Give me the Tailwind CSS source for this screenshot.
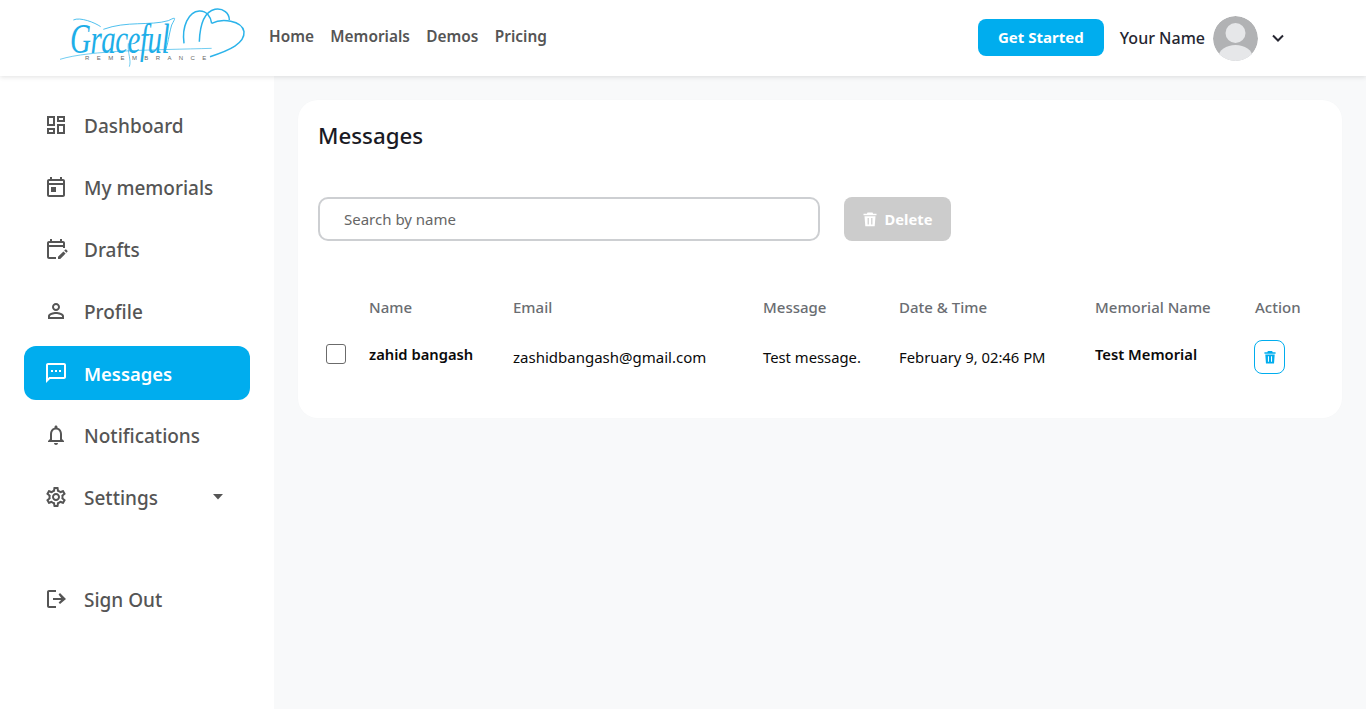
<!doctype html>
<html lang="en">
<head>
<meta charset="utf-8">
<title>Messages</title>
<script src="https://cdn.jsdelivr.net/npm/@tailwindcss/browser@4"></script>
</head>
<body class="font-['Noto_Sans',sans-serif] bg-[#f8f9fa] overflow-hidden">
<div class="w-[1366px] h-[709px] flex flex-col">
  <header class="h-[76px] shrink-0 bg-white shadow-[0_1px_5px_rgba(0,0,0,0.12)] relative z-10 flex items-center">
    <div class="w-[269px] shrink-0 h-full relative">
      <svg class="absolute left-[40px] top-0" width="240" height="80" viewBox="0 0 720 240" fill="none" stroke="#2bb3ea">
        <path d="M60 178C150 150 350 150 515 145" stroke-width="2"/>
        <path d="M432 130C425 80 445 35 478 33C500 32 512 50 515 70" stroke-width="4.5"/>
        <path d="M478 125C480 70 495 35 525 28C550 24 568 40 568 60" stroke-width="4.5"/>
        <path d="M515 70C545 55 605 60 612 95C615 130 570 150 510 170" stroke-width="4.5"/>
        <path d="M100 60C120 50 165 68 182 80" stroke-width="2.5"/>
        <path d="M190 88C260 62 330 78 385 62C412 48 405 55 395 75C385 110 385 130 375 155" stroke-width="2.5"/>
        <path d="M265 130C262 160 275 180 268 200" stroke-width="2"/>
      </svg>
      <span class="absolute left-[70px] top-[27px] font-['Liberation_Serif',serif] italic text-[29px] leading-[22px] tracking-[-0.5px] scale-y-[1.45] text-[#1eaee8]">Graceful</span>
      <span class="absolute left-[85px] top-[55px] font-['Liberation_Sans',sans-serif] text-[6px] leading-[7px] tracking-[7.4px] text-[#666]">REMEMBRANCE</span>
    </div>
    <nav class="flex gap-[16.4px] text-[15.4px] font-semibold text-[#555] -mt-[3px]">
      <a>Home</a><a>Memorials</a><a>Demos</a><a>Pricing</a>
    </nav>
    <div class="ml-auto flex items-center mr-[80px]">
      <button class="w-[126px] h-[37px] -mt-[1px] rounded-lg bg-[#00adee] text-white text-[15px] font-bold">Get Started</button>
      <span class="ml-4 text-[16px] font-medium text-[#262631]">Your Name</span>
      <svg class="ml-2 rounded-full" width="45" height="45" viewBox="0 0 45 45">
        <circle cx="22.5" cy="22.5" r="22.5" fill="#b1b2b4"/>
        <circle cx="22.5" cy="17" r="10" fill="#e6e7e9"/>
        <ellipse cx="22.5" cy="41" rx="17" ry="12" fill="#e6e7e9"/>
      </svg>
      <svg class="ml-[12px]" width="16" height="16" viewBox="0 0 16 16" fill="none" stroke="#262631" stroke-width="2"><path d="M3 5.5l5 5 5-5"/></svg>
    </div>
  </header>
  <div class="flex flex-1 min-h-0">
    <aside class="w-[274px] shrink-0 bg-white px-6 pt-[22px] text-[#555] text-[19px] font-medium">
      <div class="flex flex-col gap-2">
        <a class="h-[54px] rounded-xl flex items-center gap-[16px] px-5">
          <svg class="w-6 h-6 shrink-0" viewBox="0 0 24 24" fill="currentColor"><path d="M19 5v2h-4V5h4M9 5v6H5V5h4m10 8v6h-4v-6h4M9 17v2H5v-2h4M21 3h-8v6h8V3zM11 3H3v10h8V3zm10 8h-8v10h8V11zm-10 4H3v6h8v-6z"/></svg>
          <span class="pt-[2px]">Dashboard</span>
        </a>
        <a class="h-[54px] rounded-xl flex items-center gap-[16px] px-5">
          <svg class="w-6 h-6 shrink-0" viewBox="0 0 24 24" fill="currentColor"><path d="M19 4h-1V2h-2v2H8V2H6v2H5c-1.1 0-2 .9-2 2v14c0 1.1.9 2 2 2h14c1.1 0 2-.9 2-2V6c0-1.1-.9-2-2-2zm0 16H5V10h14v10zm0-12H5V6h14v2zM7 12h5v5H7z"/></svg>
          <span class="pt-[2px]">My memorials</span>
        </a>
        <a class="h-[54px] rounded-xl flex items-center gap-[16px] px-5">
          <svg class="w-6 h-6 shrink-0" viewBox="0 0 24 24" fill="currentColor"><path d="M5 22c-1.1 0-2-.9-2-2V6c0-1.1.9-2 2-2h1V2h2v2h8V2h2v2h1c1.1 0 2 .9 2 2v5h-2v-1H5v10h7v2H5zM5 8h14V6H5v2z"/><path d="M14 22v-2.2l5.4-5.4 2.2 2.2-5.4 5.4H14zm6.2-8.4l1-1c.3-.3.7-.3 1 0l1.2 1.2c.3.3.3.7 0 1l-1 1-2.2-2.2z"/></svg>
          <span class="pt-[2px]">Drafts</span>
        </a>
        <a class="h-[54px] rounded-xl flex items-center gap-[16px] px-5">
          <svg class="w-6 h-6 shrink-0" viewBox="0 0 24 24" fill="currentColor"><path d="M12 6c1.1 0 2 .9 2 2s-.9 2-2 2-2-.9-2-2 .9-2 2-2m0 9c2.7 0 5.8 1.29 6 2v1H6v-.99c.2-.72 3.3-2.01 6-2.01M12 4C9.79 4 8 5.79 8 8s1.79 4 4 4 4-1.79 4-4-1.79-4-4-4zm0 9c-2.67 0-8 1.34-8 4v3h16v-3c0-2.66-5.33-4-8-4z"/></svg>
          <span class="pt-[2px]">Profile</span>
        </a>
        <a class="h-[54px] rounded-xl flex items-center gap-[16px] px-5 bg-[#00adee] text-white text-[18.4px] font-semibold">
          <svg class="w-6 h-6 shrink-0" viewBox="0 0 24 24" fill="currentColor"><path d="M20 2H4c-1.1 0-2 .9-2 2v18l4-4h14c1.1 0 2-.9 2-2V4c0-1.1-.9-2-2-2zm0 14H5.17L4 17.17V4h16v12zM7 9h2v2H7zm4 0h2v2h-2zm4 0h2v2h-2z"/></svg>
          <span class="pt-[2px]">Messages</span>
        </a>
        <a class="h-[54px] rounded-xl flex items-center gap-[16px] px-5">
          <svg class="w-6 h-6 shrink-0" viewBox="0 0 24 24" fill="currentColor"><path d="M12 22c1.1 0 2-.9 2-2h-4c0 1.1.9 2 2 2zm6-6v-5c0-3.07-1.63-5.64-4.5-6.32V4c0-.83-.67-1.5-1.5-1.5s-1.5.67-1.5 1.5v.68C7.64 5.36 6 7.92 6 11v5l-2 2v1h16v-1l-2-2zm-2 1H8v-6c0-2.48 1.51-4.5 4-4.5s4 2.02 4 4.5v6z"/></svg>
          <span class="pt-[2px]">Notifications</span>
        </a>
        <a class="h-[54px] rounded-xl flex items-center gap-[16px] px-5">
          <svg class="w-6 h-6 shrink-0" viewBox="0 0 24 24" fill="currentColor"><path d="M19.43 12.98c.04-.32.07-.64.07-.98s-.03-.66-.07-.98l2.11-1.65c.19-.15.24-.42.12-.64l-2-3.46c-.12-.22-.39-.3-.61-.22l-2.49 1c-.52-.4-1.08-.73-1.69-.98l-.38-2.65C14.46 2.18 14.25 2 14 2h-4c-.25 0-.46.18-.49.42l-.38 2.65c-.61.25-1.17.59-1.69.98l-2.49-1c-.23-.09-.49 0-.61.22l-2 3.46c-.13.22-.07.49.12.64l2.11 1.65c-.04.32-.07.65-.07.98s.03.66.07.98l-2.11 1.65c-.19.15-.24.42-.12.64l2 3.46c.12.22.39.3.61.22l2.49-1c.52.4 1.08.73 1.69.98l.38 2.65c.03.24.24.42.49.42h4c.25 0 .46-.18.49-.42l.38-2.65c.61-.25 1.17-.59 1.69-.98l2.49 1c.23.09.49 0 .61-.22l2-3.46c.12-.22.07-.49-.12-.64l-2.11-1.65zm-1.98-1.71c.04.31.05.52.05.73 0 .21-.02.43-.05.73l-.14 1.13.89.7 1.08.84-.7 1.21-1.27-.51-1.04-.42-.9.68c-.43.32-.84.56-1.25.73l-1.06.43-.16 1.13-.2 1.35h-1.4l-.19-1.35-.16-1.13-1.06-.43c-.43-.18-.83-.41-1.23-.71l-.91-.7-1.06.43-1.27.51-.7-1.21 1.08-.84.89-.7-.14-1.13c-.03-.31-.05-.54-.05-.74s.02-.43.05-.73l.14-1.13-.89-.7-1.08-.84.7-1.21 1.27.51 1.04.42.9-.68c.43-.32.84-.56 1.25-.73l1.06-.43.16-1.13.2-1.35h1.39l.19 1.35.16 1.13 1.06.43c.43.18.83.41 1.23.71l.91.7 1.06-.43 1.27-.51.7 1.21-1.07.85-.89.7.14 1.13zM12 8c-2.21 0-4 1.79-4 4s1.79 4 4 4 4-1.79 4-4-1.79-4-4-4zm0 6c-1.1 0-2-.9-2-2s.9-2 2-2 2 .9 2 2-.9 2-2 2z"/></svg>
          <span class="pt-[2px]">Settings</span>
          <svg class="ml-auto mr-[6px]" width="12" height="6" viewBox="0 0 12 6" fill="currentColor"><path d="M1 0h10L6 5.5z"/></svg>
        </a>
      </div>
      <a class="mt-[48px] h-[54px] rounded-xl flex items-center gap-[16px] px-5">
        <svg class="w-6 h-6 shrink-0" viewBox="0 0 24 24" fill="currentColor"><path d="M5 21c-1.1 0-2-.9-2-2V5c0-1.1.9-2 2-2h7v2H5v14h7v2H5zm11-4-1.4-1.45 2.55-2.55H9v-2h8.15L14.6 7.45 16 6l6 6-6 5z"/></svg>
        <span class="pt-[2px]">Sign Out</span>
      </a>
    </aside>
    <main class="flex-1 min-w-0 pt-6 pl-6 pr-6">
      <section class="bg-white rounded-[20px] h-[318px] px-5 pt-[19px] shadow-[0_0_2px_rgba(0,0,0,0.02)]">
        <h1 class="text-[22.3px] leading-[34px] font-medium text-[#1a1a24]">Messages</h1>
        <div class="flex gap-6 mt-[44px]">
          <input class="w-[502px] h-[44px] rounded-[10px] border-2 border-[#cdcfd2] bg-white pl-6 text-[15px] text-[#555] placeholder:text-[#666] outline-none" placeholder="Search by name">
          <button class="w-[107px] h-[44px] rounded-lg bg-[#cccccc] text-white text-[14.7px] font-bold flex items-center justify-center gap-2">
            <svg width="14" height="16" viewBox="0 0 14 16" fill="white"><path d="M4.5 1.5h5l.6 1.2H13.5v1.6H.5V2.7h3.4zM1.5 5.3h11l-.8 10H2.3zM4.6 7v6.4h1.2V7zm3.6 0v6.4h1.2V7z"/></svg>
            Delete
          </button>
        </div>
        <div class="mt-[55px] grid grid-cols-[51px_144px_250px_136px_196px_160px] items-center text-[15px] text-[#0a0a0a]">
          <div></div>
          <div class="font-medium text-[#6a6d72] h-[22px] leading-[22px]">Name</div>
          <div class="font-medium text-[#6a6d72] h-[22px] leading-[22px]">Email</div>
          <div class="font-medium text-[#6a6d72] h-[22px] leading-[22px]">Message</div>
          <div class="font-medium text-[#6a6d72] h-[22px] leading-[22px]">Date &amp; Time</div>
          <div class="font-medium text-[#6a6d72] h-[22px] leading-[22px]">Memorial Name</div>
          <div class="font-medium text-[#6a6d72] h-[22px] leading-[22px] col-start-7">Action</div>
          <div class="h-[78px] flex items-center pl-2 pb-[6px]"><span class="block w-5 h-5 rounded-[3px] border border-[#6b6b6b] bg-white"></span></div>
          <div class="font-semibold text-[14.75px] pb-[6px]">zahid bangash</div>
          <div>zashidbangash@gmail.com</div>
          <div class="text-[14.8px]">Test message.</div>
          <div class="text-[14.8px]">February 9, 02:46 PM</div>
          <div class="font-semibold text-[14.75px] pb-[6px]">Test Memorial</div>
          <div class="col-start-7 -ml-[1px]">
            <span class="w-[31px] h-[34px] rounded-lg border border-[#00adee] flex items-center justify-center">
              <svg width="12" height="14" viewBox="0 0 14 16" fill="#00adee"><path d="M4.5 1h5l.6 1.4H13.5v1.8H.5V2.4h3.4zM1.5 5.2h11l-.8 10.3H2.3zM4.6 7v6.6h1.2V7zm3.6 0v6.6h1.2V7z"/></svg>
            </span>
          </div>
        </div>
      </section>
    </main>
  </div>
</div>
</body>
</html>
